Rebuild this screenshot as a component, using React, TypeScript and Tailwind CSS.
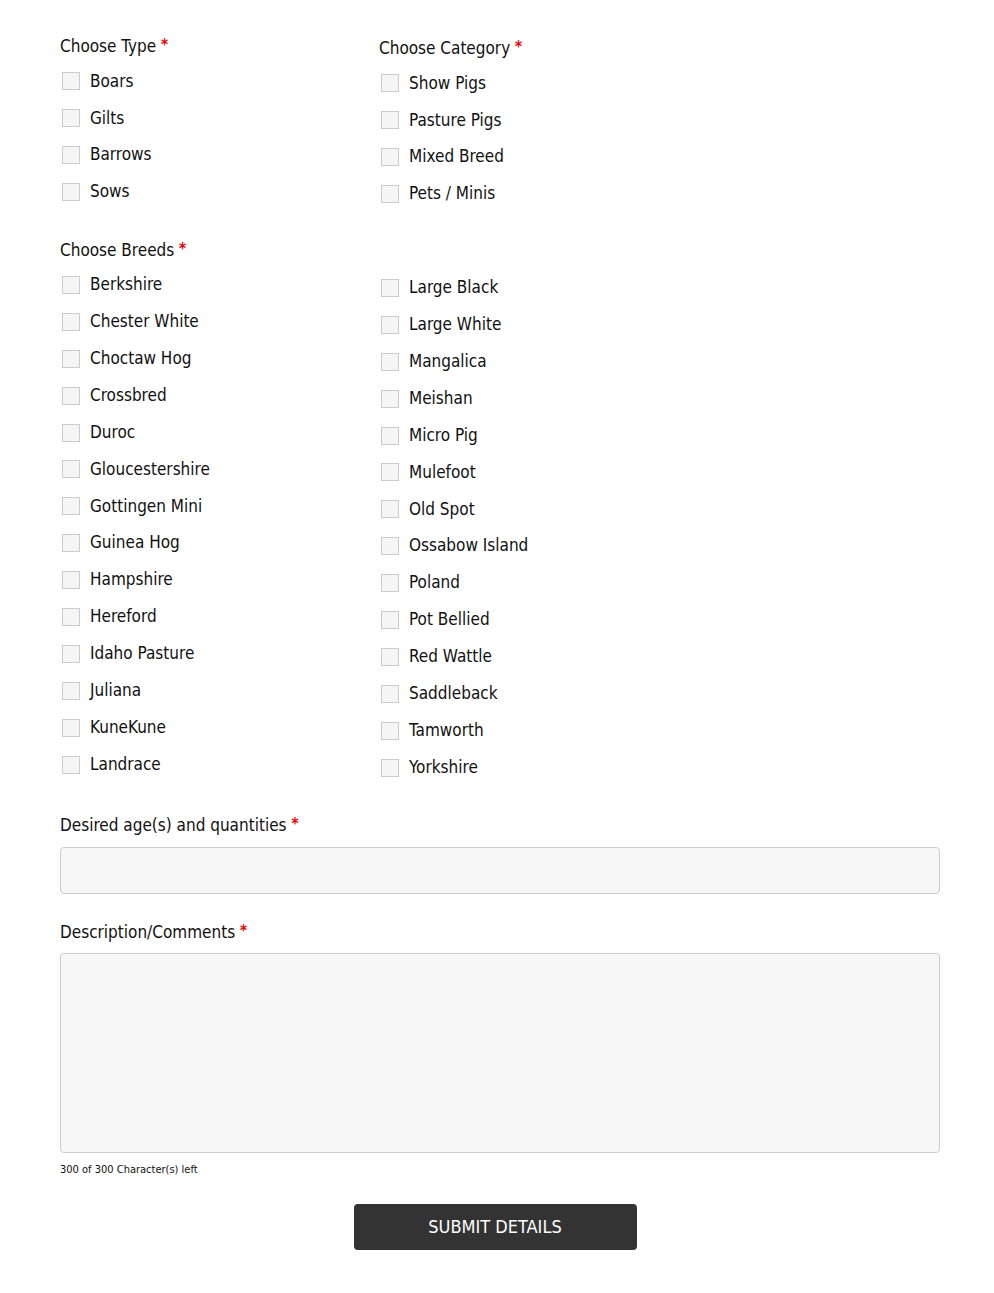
const types = ['Boars', 'Gilts', 'Barrows', 'Sows']
const categories = ['Show Pigs', 'Pasture Pigs', 'Mixed Breed', 'Pets / Minis']
const breedsLeft = [
  'Berkshire', 'Chester White', 'Choctaw Hog', 'Crossbred', 'Duroc', 'Gloucestershire',
  'Gottingen Mini', 'Guinea Hog', 'Hampshire', 'Hereford', 'Idaho Pasture', 'Juliana',
  'KuneKune', 'Landrace',
]
const breedsRight = [
  'Large Black', 'Large White', 'Mangalica', 'Meishan', 'Micro Pig', 'Mulefoot', 'Old Spot',
  'Ossabow Island', 'Poland', 'Pot Bellied', 'Red Wattle', 'Saddleback', 'Tamworth', 'Yorkshire',
]

const Label = ({ children }: { children: React.ReactNode }) => (
  <div className="text-[17px] leading-[24px] text-[#111]">
    {children} <span className="relative top-[-2px] text-[15px] font-bold text-[#e00]">*</span>
  </div>
)

const Check = ({ label }: { label: string }) => (
  <label className="flex h-[36.9px] items-center gap-[10px] pl-[2px] text-[17px] text-[#111]">
    <span className="h-[18px] w-[18px] shrink-0 border border-[#ccc] bg-[#f5f5f5]" />
    <span>{label}</span>
  </label>
)

export default function App() {
  return (
    <div className="min-h-[1293px] bg-white px-[60px] pt-[34px] font-['DejaVu_Sans_Condensed','DejaVu_Sans',sans-serif]">
      <div className="grid grid-cols-[319px_1fr]">
        <div>
          <Label>Choose Type</Label>
          <div className="mt-[4px]">
            {types.map((t) => <Check key={t} label={t} />)}
          </div>
        </div>
        <div className="pt-[2px]">
          <Label>Choose Category</Label>
          <div className="mt-[4px]">
            {categories.map((t) => <Check key={t} label={t} />)}
          </div>
        </div>
      </div>

      <div className="mt-[25px]">
        <Label>Choose Breeds</Label>
        <div className="mt-[4px] grid grid-cols-[319px_1fr]">
          <div>
            {breedsLeft.map((t) => <Check key={t} label={t} />)}
          </div>
          <div className="pt-[3px]">
            {breedsRight.map((t) => <Check key={t} label={t} />)}
          </div>
        </div>
      </div>

      <div className="mt-[27px] w-[880px]">
        <Label>Desired age(s) and quantities</Label>
        <input className="mt-[9px] block h-[47px] w-full rounded-[4px] border border-[#ccc] bg-[#f7f7f7]" />

        <div className="mt-[26px]">
          <Label>Description/Comments</Label>
        </div>
        <textarea className="mt-[8px] block h-[200px] w-full resize-none rounded-[4px] border border-[#ccc] bg-[#f7f7f7]" />
        <div className="mt-[9px] text-[11px] text-[#111]">300 of 300 Character(s) left</div>

        <div className="mt-[25px] flex justify-center">
          <button className="ml-[-10px] h-[46px] w-[283px] rounded-[4px] bg-[#333] text-[18px] text-white">
            SUBMIT DETAILS
          </button>
        </div>
      </div>
    </div>
  )
}
